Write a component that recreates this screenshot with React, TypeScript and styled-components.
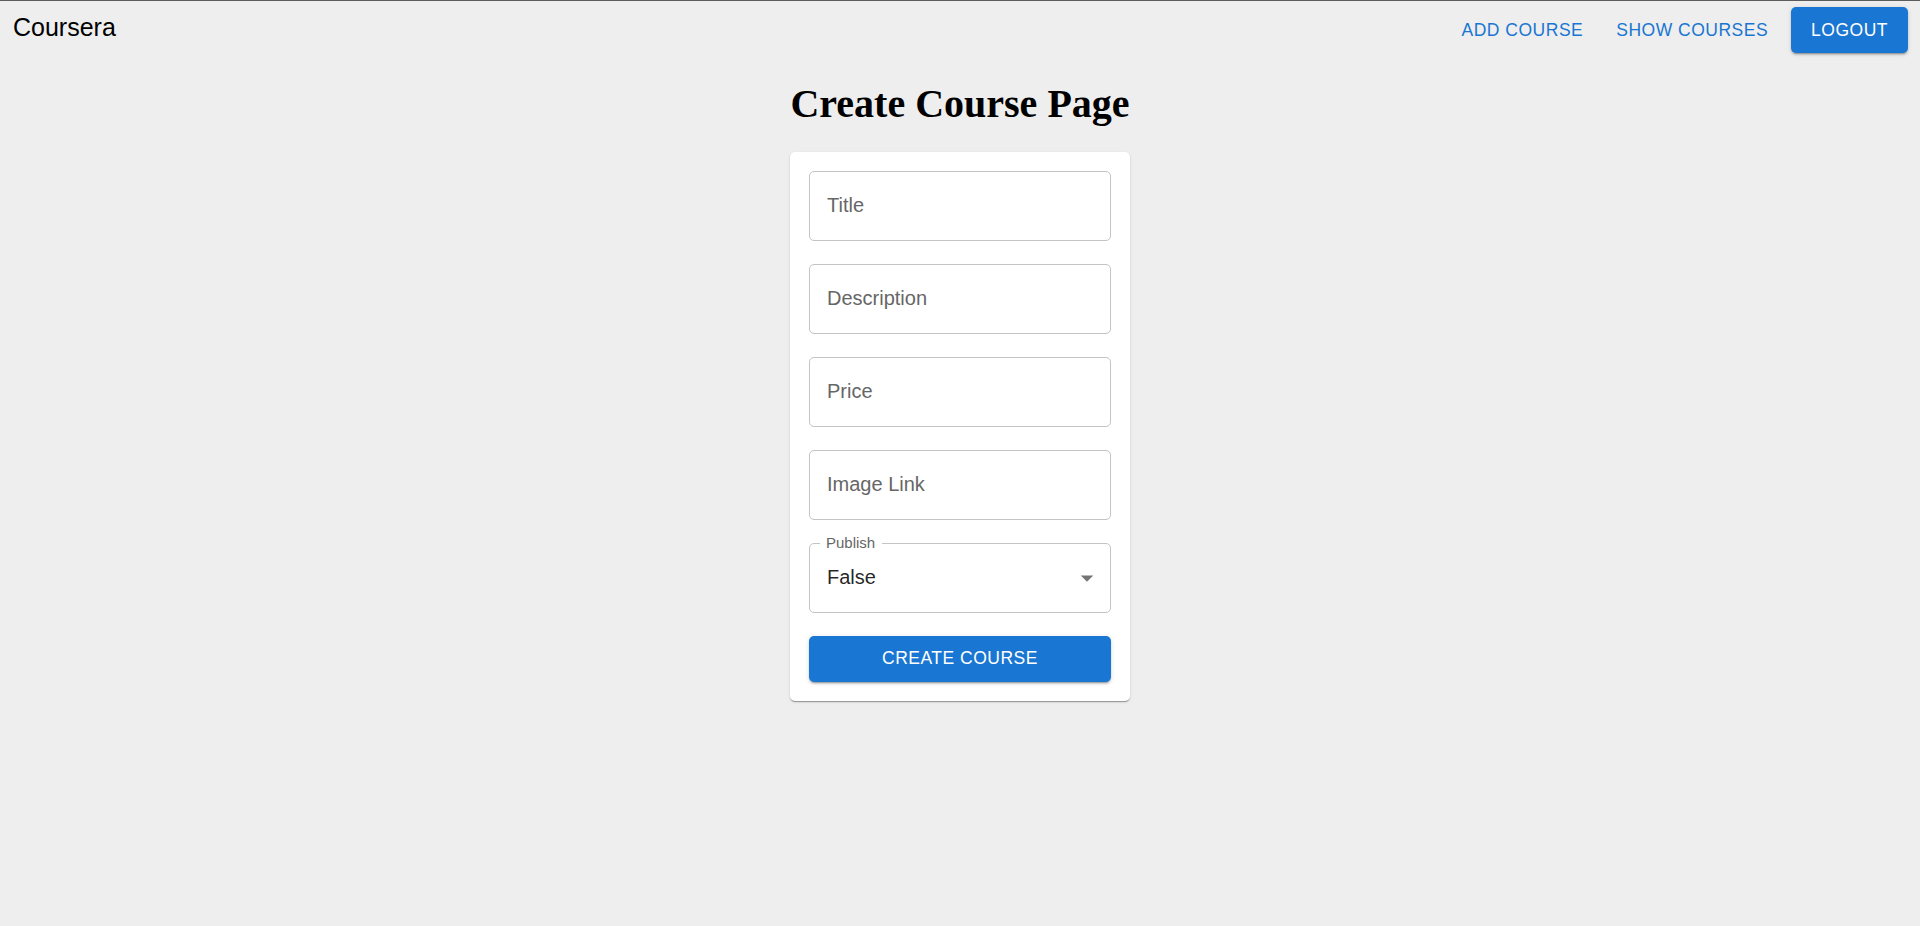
import React from "react";
import styled, { createGlobalStyle } from "styled-components";

const GlobalStyle = createGlobalStyle`
  html, body {
    margin: 0;
    padding: 0;
    background: #eeeeee;
  }
  body {
    font-family: "Liberation Sans", Arial, sans-serif;
  }
  * { box-sizing: border-box; }
`;

const Page = styled.div`
  min-height: 926px;
  border-top: 1px solid #5c5c5c;
  background: #eeeeee;
`;

const Navbar = styled.nav`
  display: flex;
  justify-content: space-between;
  align-items: flex-start;
  height: 53px;
  padding: 6px 12px 0 13px;
`;

const Logo = styled.div`
  margin-top: 6px;
  font-size: 25px;
  line-height: 28px;
  color: #000;
`;

const NavActions = styled.div`
  display: flex;
  align-items: center;
  gap: 13px;
`;

const NavButton = styled.button<{ $contained?: boolean }>`
  font-family: "Liberation Sans", Arial, sans-serif;
  font-size: 17.5px;
  font-weight: 500;
  letter-spacing: 0.5px;
  line-height: 1.75;
  text-transform: uppercase;
  border: none;
  border-radius: 5px;
  cursor: pointer;
  padding: ${(p) => (p.$contained ? "7.5px 20px" : "7.5px 10px")};
  background: ${(p) => (p.$contained ? "#1976d2" : "transparent")};
  color: ${(p) => (p.$contained ? "#ffffff" : "#1976d2")};
  box-shadow: ${(p) =>
    p.$contained
      ? "0px 3px 1px -2px rgba(0,0,0,0.2), 0px 2px 2px 0px rgba(0,0,0,0.14), 0px 1px 5px 0px rgba(0,0,0,0.12)"
      : "none"};
`;

const Heading = styled.h1`
  margin: 26px 0 24.5px;
  text-align: center;
  font-family: "Liberation Serif", "Times New Roman", serif;
  font-weight: 700;
  font-size: 40px;
  line-height: normal;
  color: #000;
`;

const Card = styled.div`
  width: 340px;
  margin: 0 auto;
  padding: 19px;
  background: #ffffff;
  border-radius: 5px;
  display: flex;
  flex-direction: column;
  gap: 23px;
  box-shadow: 0px 2px 1px -1px rgba(0,0,0,0.2), 0px 1px 1px 0px rgba(0,0,0,0.14), 0px 1px 3px 0px rgba(0,0,0,0.12);
`;

const TextInput = styled.input`
  display: block;
  width: 100%;
  height: 70px;
  padding: 0 17px;
  border: 1px solid #c4c4c4;
  border-radius: 5px;
  background: #fff;
  font-family: "Liberation Sans", Arial, sans-serif;
  font-size: 20px;
  color: rgba(0, 0, 0, 0.87);
  outline: none;
  &::placeholder {
    color: #666666;
    opacity: 1;
  }
`;

const SelectBox = styled.div`
  position: relative;
  display: flex;
  align-items: center;
  justify-content: space-between;
  height: 70px;
  padding: 0 8px 0 17px;
  border: 1px solid #c4c4c4;
  border-radius: 5px;
  background: #fff;
`;

const SelectLabel = styled.span`
  position: absolute;
  left: 9.5px;
  top: -10px;
  padding: 0 6.5px;
  background: #fff;
  font-size: 15px;
  line-height: 18px;
  color: #666666;
`;

const SelectValue = styled.span`
  font-size: 20px;
  line-height: normal;
  color: rgba(0, 0, 0, 0.87);
`;

const ArrowIcon = styled.svg`
  width: 30px;
  height: 30px;
  fill: rgba(0, 0, 0, 0.54);
  flex-shrink: 0;
`;

const SubmitButton = styled.button`
  width: 100%;
  height: 46px;
  border: none;
  border-radius: 5px;
  background: #1976d2;
  color: #fff;
  font-family: "Liberation Sans", Arial, sans-serif;
  font-size: 17.5px;
  font-weight: 500;
  letter-spacing: 0.5px;
  text-transform: uppercase;
  cursor: pointer;
  box-shadow: 0px 3px 1px -2px rgba(0,0,0,0.2), 0px 2px 2px 0px rgba(0,0,0,0.14), 0px 1px 5px 0px rgba(0,0,0,0.12);
`;

const fields = ["Title", "Description", "Price", "Image Link"];

export default function App() {
  return (
    <>
      <GlobalStyle />
      <Page>
        <Navbar>
          <Logo>Coursera</Logo>
          <NavActions>
            <NavButton>Add Course</NavButton>
            <NavButton>Show Courses</NavButton>
            <NavButton $contained>Logout</NavButton>
          </NavActions>
        </Navbar>
        <Heading>Create Course Page</Heading>
        <Card>
          {fields.map((f) => (
            <TextInput key={f} placeholder={f} />
          ))}
          <SelectBox>
            <SelectLabel>Publish</SelectLabel>
            <SelectValue>False</SelectValue>
            <ArrowIcon viewBox="0 0 24 24">
              <path d="M7 10l5 5 5-5z" />
            </ArrowIcon>
          </SelectBox>
          <SubmitButton>Create Course</SubmitButton>
        </Card>
      </Page>
    </>
  );
}
